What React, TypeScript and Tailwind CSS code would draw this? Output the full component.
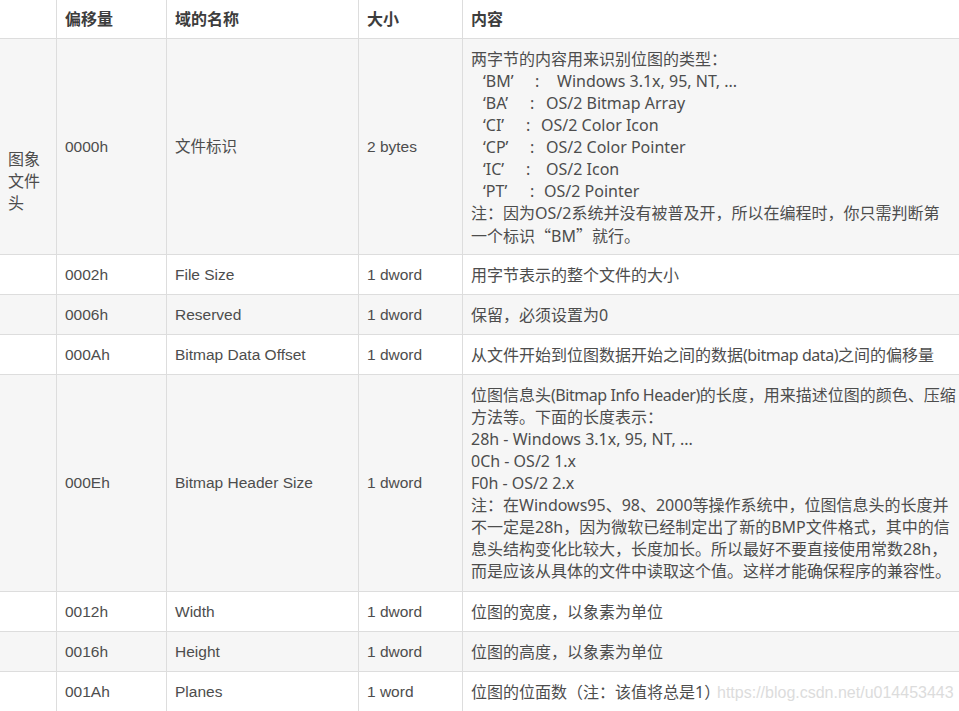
const LEFT_FONT = "font-['Liberation_Sans','Noto_Sans_CJK_SC',sans-serif]";
const CONTENT_FONT = "font-['Noto_Sans','Noto_Sans_CJK_SC',sans-serif]";

type Row = {
  offset: string;
  name: string;
  size: string;
  lines: React.ReactNode[];
  tall?: boolean;
};

// latin runs in parentheses are set a little tighter, like the original's YaHei/Segoe mix
function Tight({ children }: { children: React.ReactNode }) {
  return <span className="tracking-[-0.45px]">{children}</span>;
}

const rows: Row[] = [
  { offset: '0002h', name: 'File Size', size: '1 dword', lines: ['用字节表示的整个文件的大小'] },
  { offset: '0006h', name: 'Reserved', size: '1 dword', lines: ['保留，必须设置为0'] },
  {
    offset: '000Ah',
    name: 'Bitmap Data Offset',
    size: '1 dword',
    lines: [
      <>
        从文件开始到位图数据开始之间的数据<Tight>(bitmap data)</Tight>之间的偏移量
      </>,
    ],
  },
  {
    offset: '000Eh',
    name: 'Bitmap Header Size',
    size: '1 dword',
    tall: true,
    lines: [
      <>
        位图信息头<Tight>(Bitmap Info Header)</Tight>的长度，用来描述位图的颜色、压缩
      </>,
      '方法等。下面的长度表示：',
      '28h - Windows 3.1x, 95, NT, ...',
      '0Ch - OS/2 1.x',
      'F0h - OS/2 2.x',
      '注：在Windows95、98、2000等操作系统中，位图信息头的长度并',
      '不一定是28h，因为微软已经制定出了新的BMP文件格式，其中的信',
      '息头结构变化比较大，长度加长。所以最好不要直接使用常数28h，',
      '而是应该从具体的文件中读取这个值。这样才能确保程序的兼容性。',
    ],
  },
  { offset: '0012h', name: 'Width', size: '1 dword', lines: ['位图的宽度，以象素为单位'] },
  { offset: '0016h', name: 'Height', size: '1 dword', lines: ['位图的高度，以象素为单位'] },
  { offset: '001Ah', name: 'Planes', size: '1 word', lines: ['位图的位面数（注：该值将总是1）'] },
];

// signature codes with hand-placed colon / value columns
const codes = [
  { code: '‘BM’', w1: 'w-[64px]', w2: 'w-[22px]', text: 'Windows 3.1x, 95, NT, ...' },
  { code: '‘BA’', w1: 'w-[59px]', w2: 'w-[16px]', text: 'OS/2 Bitmap Array' },
  { code: '‘CI’', w1: 'w-[55px]', w2: 'w-[15px]', text: 'OS/2 Color Icon' },
  { code: '‘CP’', w1: 'w-[59px]', w2: 'w-[16px]', text: 'OS/2 Color Pointer' },
  { code: '‘IC’', w1: 'w-[55px]', w2: 'w-[20px]', text: 'OS/2 Icon' },
  { code: '‘PT’', w1: 'w-[59px]', w2: 'w-[14px]', text: 'OS/2 Pointer' },
];

const cell = 'border-r border-b border-[#dddddd] px-2 align-middle';
const leftCell = `${cell} ${LEFT_FONT} text-[15.5px]`;
const contentCell = `border-b border-[#dddddd] px-2 pt-[9px] align-top ${CONTENT_FONT} text-[16px]`;
const headCell = 'border-r border-b border-[#dddddd] px-2 pt-2 pb-2 text-left';
const line = 'h-[22px] whitespace-nowrap';

export default function App() {
  return (
    <div className="relative w-[959px] h-[711px] overflow-hidden bg-white text-[#4d4d4d]">
      <table className="w-[959px] table-fixed border-separate border-spacing-0 leading-[22px]">
        <colgroup>
          <col className="w-[57px]" />
          <col className="w-[110px]" />
          <col className="w-[192px]" />
          <col className="w-[104px]" />
          <col className="w-[496px]" />
        </colgroup>
        <thead>
          <tr className="bg-white text-[#3d3d3d] font-bold text-[16px] font-['Noto_Sans','Noto_Sans_CJK_SC',sans-serif]">
            <th className={headCell}></th>
            <th className={headCell}>偏移量</th>
            <th className={headCell}>域的名称</th>
            <th className={headCell}>大小</th>
            <th className="border-b border-[#dddddd] px-2 pt-2 pb-2 text-left">内容</th>
          </tr>
        </thead>
        <tbody>
          <tr className="bg-[#f6f6f6]">
            <td className={`border-r border-b border-[#dddddd] px-2 pt-[109px] align-top text-[16px] ${CONTENT_FONT}`}>
              图象文件头
            </td>
            <td className={leftCell}>0000h</td>
            <td className={leftCell}>文件标识</td>
            <td className={leftCell}>2 bytes</td>
            <td className={`${contentCell} pb-[8px]`}>
              <div className={line}>两字节的内容用来识别位图的类型：</div>
              {codes.map((c) => (
                <div key={c.code} className={`flex ${line}`}>
                  <span className={`${c.w1} shrink-0 pl-3`}>{c.code}</span>
                  <span className={`${c.w2} shrink-0`}>:</span>
                  <span>{c.text}</span>
                </div>
              ))}
              <div className={line}>注：因为OS/2系统并没有被普及开，所以在编程时，你只需判断第</div>
              <div className={line}>
                一个标识<span className="font-['Noto_Sans_CJK_SC',sans-serif]">“</span>BM
                <span className="font-['Noto_Sans_CJK_SC',sans-serif]">”</span>就行。
              </div>
            </td>
          </tr>
          {rows.map((r, i) => (
            <tr key={r.offset} className={i % 2 === 0 ? 'bg-white' : 'bg-[#f6f6f6]'}>
              <td className={cell}></td>
              <td className={leftCell}>{r.offset}</td>
              <td className={leftCell}>{r.name}</td>
              <td className={leftCell}>{r.size}</td>
              <td className={`${contentCell} ${r.tall ? 'pb-[9px]' : 'pb-[8px]'}`}>
                {r.lines.map((l, j) => (
                  <div key={j} className={line}>
                    {l}
                  </div>
                ))}
              </td>
            </tr>
          ))}
        </tbody>
      </table>

      {/* csdn watermark over the last cell */}
      <div className="absolute left-[717px] top-[682px] font-['Liberation_Sans',sans-serif] text-[16px] leading-[22px] text-[#dcdcdc]">
        https://blog.csdn.net/u014453443
      </div>
    </div>
  );
}
